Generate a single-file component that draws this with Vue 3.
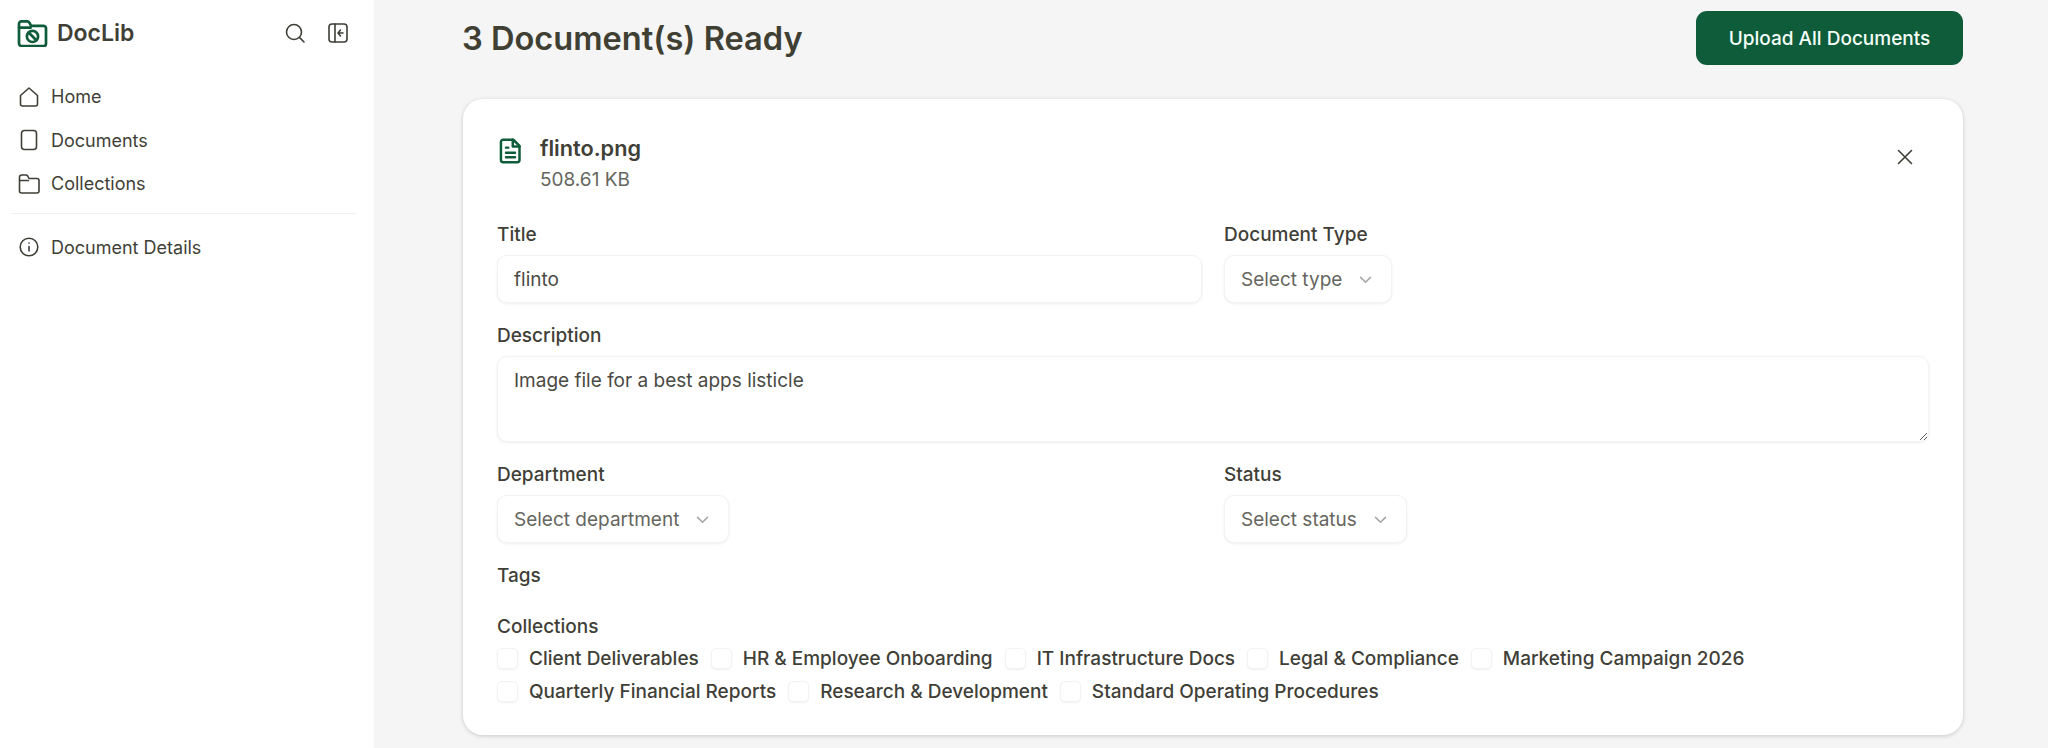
<template>
  <div class="app">
    <aside class="sidebar">
      <div class="brand-row">
        <div class="brand">
          <svg class="logo" viewBox="0 0 32 28" fill="none" stroke="#0f5c3a" stroke-width="2.8" stroke-linecap="round" stroke-linejoin="round">
            <path d="M2 23V4a2.5 2.5 0 0 1 2.5-2.5h6c1 0 1.8.5 2.3 1.3L14.5 6h13A3 3 0 0 1 30 9v15.5a2.5 2.5 0 0 1-2.5 2.5H5a3 3 0 0 1-3-3z" />
            <path d="M2 8h12" />
            <circle cx="16" cy="17" r="5.800" />
            <path d="M12 13l8 8" />
          </svg>
          <span class="brand-name">DocLib</span>
        </div>
        <div class="brand-actions">
          <svg class="icon" viewBox="0 0 24 24">
            <circle cx="11" cy="11" r="7.5" />
            <path d="M21 21l-4.600-4.600" />
          </svg>
          <svg class="icon" viewBox="0 0 24 24">
            <rect x="3" y="3" width="18" height="18" rx="3" />
            <path d="M9 3v18M17 12h-5M14.500 9L12 12l2.500 3" />
          </svg>
        </div>
      </div>

      <nav class="nav">
        <a v-for="item in navItems" :key="item.label" class="nav-item">
          <svg class="icon" viewBox="0 0 24 24" v-html="item.icon"></svg>
          <span>{{ item.label }}</span>
        </a>
      </nav>
      <div class="nav-divider"></div>
      <a class="nav-item">
        <svg class="icon" viewBox="0 0 24 24">
          <circle cx="12" cy="12" r="8.800" />
          <path d="M12 11.500v4.500M12 8v.1" />
        </svg>
        <span>Document Details</span>
      </a>
    </aside>

    <main class="main">
      <header class="page-header">
        <h1>3 Document(s) Ready</h1>
        <button class="upload-btn">Upload All Documents</button>
      </header>

      <section class="card">
        <div class="file-row">
          <div class="file-info">
            <svg class="file-icon" viewBox="0 0 24 24" fill="none" stroke="#0f5c3a" stroke-width="2.200" stroke-linecap="round" stroke-linejoin="round">
              <path d="M5.500 2h9L20 7.500V20a2 2 0 0 1-2 2H5.500a2 2 0 0 1-2-2V4a2 2 0 0 1 2-2z" />
              <path d="M14 2v6h6M8 9h2M8 13.500h8M8 17.500h8" />
            </svg>
            <div>
              <div class="file-name">flinto.png</div>
              <div class="file-size">508.61 KB</div>
            </div>
          </div>
          <button class="close-btn" aria-label="Remove">
            <svg class="icon close-icon" viewBox="0 0 24 24">
              <path d="M5.500 5.500l13 13M18.500 5.500l-13 13" />
            </svg>
          </button>
        </div>

        <div class="form-grid">
          <div class="field">
            <label>Title</label>
            <input class="control" type="text" value="flinto" />
          </div>
          <div class="field">
            <label>Document Type</label>
            <button class="control select">
              <span>Select type</span>
              <svg class="chevron" viewBox="0 0 24 24"><path d="M5 9l7 7 7-7" /></svg>
            </button>
          </div>
        </div>

        <div class="field">
          <label>Description</label>
          <textarea class="control textarea" rows="2">Image file for a best apps listicle</textarea>
        </div>

        <div class="form-grid">
          <div class="field">
            <label>Department</label>
            <button class="control select">
              <span>Select department</span>
              <svg class="chevron" viewBox="0 0 24 24"><path d="M5 9l7 7 7-7" /></svg>
            </button>
          </div>
          <div class="field">
            <label>Status</label>
            <button class="control select">
              <span>Select status</span>
              <svg class="chevron" viewBox="0 0 24 24"><path d="M5 9l7 7 7-7" /></svg>
            </button>
          </div>
        </div>

        <div class="tags-label">Tags</div>

        <div class="collections">
          <div class="collections-label">Collections</div>
          <div class="check-list">
            <label v-for="name in collections" :key="name" class="check-item">
              <span class="checkbox"></span>
              <span>{{ name }}</span>
            </label>
          </div>
        </div>
      </section>
    </main>
  </div>
</template>

<script setup>
const navItems = [
  { label: 'Home', icon: '<path d="M3.500 10.500L12 3l8.500 7.500V19a2 2 0 0 1-2 2h-13a2 2 0 0 1-2-2z" />' },
  { label: 'Documents', icon: '<rect x="4.500" y="2.500" width="15" height="19" rx="3" />' },
  { label: 'Collections', icon: '<path d="M2.500 19V5a2 2 0 0 1 2-2h4.500a2 2 0 0 1 1.700 1l1.300 2.500h8a2 2 0 0 1 2 2V19a2 2 0 0 1-2 2h-15.500a2 2 0 0 1-2-2zM2.500 8.500h9" />' }
]

const collections = [
  'Client Deliverables',
  'HR & Employee Onboarding',
  'IT Infrastructure Docs',
  'Legal & Compliance',
  'Marketing Campaign 2026',
  'Quarterly Financial Reports',
  'Research & Development',
  'Standard Operating Procedures'
]
</script>

<style scoped>
.app {
  display: flex;
  height: 748px;
  overflow: hidden;
  background: #f5f5f5;
  color: #3f3f38;
  font-family: Inter, "Liberation Sans", sans-serif;
}

.sidebar {
  width: 374px;
  flex-shrink: 0;
  box-sizing: border-box;
  background: #fff;
  padding: 12px 18px 12px 11px;
}

.brand-row {
  display: flex;
  justify-content: space-between;
  align-items: center;
  height: 42px;
  padding: 0 6px;
  margin-bottom: 21px;
}

.brand {
  display: flex;
  align-items: center;
  gap: 9px;
}

.logo {
  width: 31px;
  height: 27px;
}

.brand-name {
  font-size: 23px;
  font-weight: 600;
}

.brand-actions {
  display: flex;
  gap: 19px;
}

.icon {
  width: 24px;
  height: 24px;
  display: block;
  fill: none;
  stroke: #3f3f38;
  stroke-width: 1.600;
  stroke-linecap: round;
  stroke-linejoin: round;
}

.nav {
  display: flex;
  flex-direction: column;
}

.nav-item {
  display: flex;
  align-items: center;
  gap: 10px;
  height: 43.500px;
  padding-left: 6px;
  font-size: 18px;
  color: #3f3f38;
}

.nav-divider {
  height: 1px;
  margin: 7px 0 12px;
  background: #f0f0f0;
}

.main {
  flex: 1;
  min-width: 0;
  padding: 11px 85px 0 89px;
}

.page-header {
  display: flex;
  justify-content: space-between;
  align-items: center;
  margin-bottom: 34px;
}

h1 {
  margin: 0 0 0 -1px;
  font-size: 32.600px;
  font-weight: 600;
  color: #3f3f33;
}

.upload-btn {
  width: 267px;
  height: 54px;
  border: none;
  border-radius: 11px;
  background: #0f5c3a;
  color: #f5fff9;
  font-family: inherit;
  font-size: 19px;
  font-weight: 500;
}

.card {
  box-sizing: border-box;
  height: 636px;
  padding: 34px;
  background: #fff;
  border-radius: 20px;
  box-shadow: 0 1px 4px rgba(0, 0, 0, 0.18);
}

.file-row {
  display: flex;
  justify-content: space-between;
  align-items: flex-start;
  margin-bottom: 29px;
}

.file-info {
  display: flex;
  gap: 16px;
}

.file-icon {
  width: 27px;
  height: 28px;
  margin-top: 4px;
}

.file-name {
  font-size: 21.700px;
  font-weight: 600;
  line-height: 30px;
}

.file-size {
  margin-top: 4px;
  font-size: 19px;
  line-height: 26px;
  color: #666660;
}

.close-btn {
  margin: 12px 12px 0 0;
  padding: 0;
  border: none;
  background: none;
}

.form-grid {
  display: grid;
  grid-template-columns: 705px 1fr;
  gap: 22px;
}

.field {
  display: flex;
  flex-direction: column;
  align-items: flex-start;
  margin-bottom: 20px;
}

.field label,
.tags-label,
.collections-label {
  font-size: 19px;
  font-weight: 500;
  line-height: 26px;
  color: #3f3f38;
}

.field label {
  margin-bottom: 7px;
}

.control {
  box-sizing: border-box;
  height: 48px;
  padding: 0 17px 0 16px;
  background: #fff;
  border: 1px solid #f3f3f3;
  border-radius: 10px;
  box-shadow: 0 1px 3px rgba(0, 0, 0, 0.07);
  font-family: inherit;
  font-size: 19px;
  color: #4a4a44;
  outline: none;
}

input.control {
  width: 100%;
}

.textarea {
  display: block;
  width: 100%;
  height: 86px;
  padding-top: 12px;
  line-height: 24px;
  resize: vertical;
}

.select {
  display: flex;
  align-items: center;
  gap: 15px;
  color: #666660;
}

.chevron {
  width: 17px;
  height: 17px;
  fill: none;
  stroke: #a3a3a0;
  stroke-width: 2;
  stroke-linecap: round;
  stroke-linejoin: round;
}

.tags-label {
  margin-top: 0;
}

.collections {
  margin-top: 25px;
}

.check-list {
  display: flex;
  flex-wrap: wrap;
  gap: 11px 12px;
  margin-top: 7px;
}

.check-item {
  display: flex;
  align-items: center;
  gap: 11px;
  height: 22px;
  font-size: 19px;
  font-weight: 500;
  color: #3f3f38;
}

.checkbox {
  box-sizing: border-box;
  width: 21px;
  height: 21px;
  background: #fff;
  border: 1px solid #f3f3f3;
  border-radius: 5px;
  box-shadow: 0 1px 2px rgba(0, 0, 0, 0.06);
}
</style>

<style>
html,
body {
  margin: 0;
  overflow: hidden;
}
</style>
